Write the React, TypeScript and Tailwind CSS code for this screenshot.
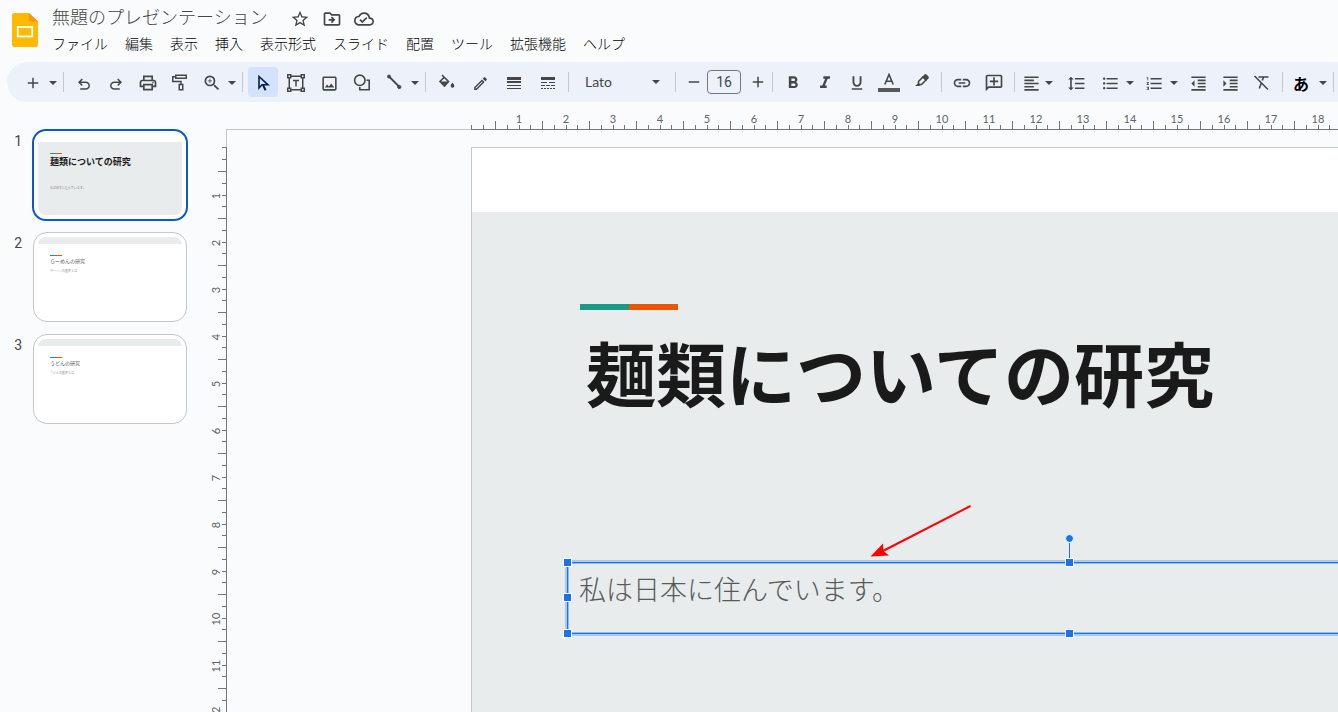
import type { ReactNode } from "react";
import {
    MdAdd,
    MdFormatAlignLeft,
    MdFormatBold,
    MdFormatIndentDecrease,
    MdFormatIndentIncrease,
    MdFormatItalic,
    MdFormatLineSpacing,
    MdFormatListBulleted,
    MdFormatListNumbered,
    MdFormatUnderlined,
    MdLink,
    MdOutlineAddComment,
    MdOutlineCloudDone,
    MdOutlineDriveFileMove,
    MdOutlineEdit,
    MdOutlineImage,
    MdOutlinePrint,
    MdRemove,
    MdStarBorder,
    MdZoomIn,
} from "react-icons/md";

const MENUS = [
    "ファイル",
    "編集",
    "表示",
    "挿入",
    "表示形式",
    "スライド",
    "配置",
    "ツール",
    "拡張機能",
    "ヘルプ",
];

interface Slide {
    title: string;
    body: string;
    cover?: boolean;
}

const SLIDES: Slide[] = [
    { title: "麺類についての研究", body: "私は日本に住んでいます。", cover: true },
    { title: "らーめんの研究", body: "ラーメンの歴史とは" },
    { title: "うどんの研究", body: "うどんの歴史とは" },
];

const range = (n: number) => Array.from({ length: n }, (_, i) => i + 1);

export default function App() {
    return (
        <div className="flex h-screen flex-col overflow-hidden bg-[#f9fbfd] font-['Roboto','Noto_Sans_CJK_JP',sans-serif] text-[#444746]">
            <Header />
            <Toolbar />
            <main className="flex min-h-0 flex-1">
                <Filmstrip />
                <Workspace />
            </main>
        </div>
    );
}

const Header = () => (
    <header className="flex h-[62px] shrink-0 items-start">
        <a href="#home" aria-label="スライド ホーム" className="mt-3 ml-3 block">
            <svg width="26" height="36" viewBox="0 0 26 36">
                <path d="M2.500 1H17l9 8.500V32.500a2.500 2.500 0 0 1-2.500 2.500h-21A2.500 2.500 0 0 1 0 32.500v-29A2.500 2.500 0 0 1 2.500 1Z" fill="#ffba00" />
                <path d="M17 1l9 8.500h-9Z" fill="#ff9310" />
                <rect x="5.800" y="15" width="14.400" height="9.500" fill="none" stroke="#fff" strokeWidth="1.800" />
            </svg>
        </a>
        <div className="ml-3.5">
            <div className="flex h-[34px] items-center">
                <h1 className="pt-0.5 text-lg font-light whitespace-nowrap">無題のプレゼンテーション</h1>
                <div className="mt-1 ml-[22px] flex gap-3">
                    <button aria-label="スター">
                        <MdStarBorder size={20} />
                    </button>
                    <button aria-label="移動">
                        <MdOutlineDriveFileMove size={20} />
                    </button>
                    <button aria-label="保存状況">
                        <MdOutlineCloudDone size={20} />
                    </button>
                </div>
            </div>
            <nav className="flex gap-[17px] text-sm text-black">
                {MENUS.map((menu) => (
                    <button key={menu} className="font-light whitespace-nowrap">
                        {menu}
                    </button>
                ))}
            </nav>
        </div>
    </header>
);

interface ToolProps {
    label: string;
    children: ReactNode;
    active?: boolean;
}

const Tool = ({ label, children, active }: ToolProps) => (
    <button
        aria-label={label}
        className={`flex h-[30px] w-[30px] shrink-0 items-center justify-center rounded pt-0.5 ${
            active ? "bg-[#d3e3fd] text-[#041e49]" : "hover:bg-[#e1e6ee]"
        }`}
    >
        {children}
    </button>
);

const CaretIcon = () => (
    <svg width="8" height="4" viewBox="0 0 8 4" fill="currentColor">
        <path d="M0 0h8L4 4Z" />
    </svg>
);

const Caret = ({ label }: { label: string }) => (
    <button aria-label={label} className="flex h-[30px] w-2.5 shrink-0 items-center justify-center pt-0.5">
        <CaretIcon />
    </button>
);

const Divider = () => <div className="mx-[5px] h-5 w-px shrink-0 bg-[#c7c7c7]" />;

const Toolbar = () => (
    <div className="ml-[7px] flex h-10 shrink-0 items-center overflow-hidden rounded-l-full bg-[#edf2fa] pl-[11px]">
        <div className="flex">
            <Tool label="新しいスライド">
                <MdAdd size={18} />
            </Tool>
            <Caret label="レイアウト付きの新しいスライド" />
        </div>
        <Divider />
        <div className="flex gap-0.5">
            <Tool label="元に戻す">
                <UndoIcon />
            </Tool>
            <Tool label="やり直し">
                <RedoIcon />
            </Tool>
            <Tool label="印刷">
                <MdOutlinePrint size={20} />
            </Tool>
            <Tool label="書式を貼り付け">
                <RollerIcon />
            </Tool>
            <div className="flex">
                <Tool label="ズーム">
                    <MdZoomIn size={20} />
                </Tool>
                <Caret label="ズームの倍率" />
            </div>
        </div>
        <Divider />
        <div className="flex gap-[3px]">
            <Tool label="選択" active>
                <CursorIcon />
            </Tool>
            <Tool label="テキスト ボックス">
                <TextBoxIcon />
            </Tool>
            <Tool label="画像を挿入">
                <MdOutlineImage size={19} />
            </Tool>
            <Tool label="図形">
                <ShapeIcon />
            </Tool>
            <div className="flex">
                <Tool label="線">
                    <LineIcon />
                </Tool>
                <Caret label="線の種類" />
            </div>
        </div>
        <Divider />
        <div className="flex gap-1">
            <Tool label="塗りつぶしの色">
                <FillIcon />
            </Tool>
            <Tool label="枠線の色">
                <MdOutlineEdit size={17} />
            </Tool>
            <Tool label="枠線の太さ">
                <WeightIcon />
            </Tool>
            <Tool label="枠線の破線">
                <DashIcon />
            </Tool>
        </div>
        <Divider />
        <button
            aria-label="フォント"
            className="flex h-[30px] w-24 shrink-0 items-center justify-between pr-2.5 pl-[11px] font-['Lato',sans-serif] text-sm"
        >
            Lato
            <CaretIcon />
        </button>
        <Divider />
        <div className="flex items-center gap-1">
            <button aria-label="フォントサイズを縮小" className="flex w-[22px] justify-end">
                <MdRemove size={18} />
            </button>
            <input
                aria-label="フォントサイズ"
                defaultValue="16"
                className="h-6 w-[34px] rounded border border-[#747775] bg-transparent text-center text-sm"
            />
            <button aria-label="フォントサイズを拡大" className="flex w-[22px] justify-end">
                <MdAdd size={18} />
            </button>
        </div>
        <Divider />
        <div className="flex gap-0.5">
            <Tool label="太字">
                <MdFormatBold size={20} />
            </Tool>
            <Tool label="斜体">
                <MdFormatItalic size={20} />
            </Tool>
            <Tool label="下線">
                <MdFormatUnderlined size={18} />
            </Tool>
            <Tool label="テキストの色">
                <TextColorIcon />
            </Tool>
            <Tool label="ハイライト カラー">
                <HighlightIcon />
            </Tool>
        </div>
        <Divider />
        <div className="flex gap-0.5">
            <Tool label="リンクを挿入">
                <MdLink size={20} />
            </Tool>
            <Tool label="コメントを追加">
                <MdOutlineAddComment size={20} className="-scale-x-100" />
            </Tool>
        </div>
        <Divider />
        <div className="flex gap-1">
            <button aria-label="配置" className="flex h-[30px] shrink-0 items-center gap-1 pt-0.5 pr-1 pl-0.5">
                <MdFormatAlignLeft size={19} />
                <CaretIcon />
            </button>
            <Tool label="行間隔と段落の間隔">
                <MdFormatLineSpacing size={19} />
            </Tool>
            <div className="flex">
                <Tool label="箇条書き">
                    <MdFormatListBulleted size={19} />
                </Tool>
                <Caret label="箇条書きの種類" />
            </div>
            <div className="flex">
                <Tool label="番号付きリスト">
                    <MdFormatListNumbered size={19} />
                </Tool>
                <Caret label="番号付きリストの種類" />
            </div>
            <div className="flex gap-0.5">
                <Tool label="インデント減">
                    <MdFormatIndentDecrease size={19} />
                </Tool>
                <Tool label="インデント増">
                    <MdFormatIndentIncrease size={19} />
                </Tool>
                <Tool label="書式をクリア">
                    <ClearIcon />
                </Tool>
            </div>
        </div>
        <Divider />
        <div className="flex">
            <Tool label="入力ツール">
                <span className="pt-1 pr-1 text-base font-bold text-black">あ</span>
            </Tool>
            <Caret label="入力ツールを選択" />
        </div>
        <Divider />
    </div>
);

const Filmstrip = () => (
    <aside className="w-[209px] shrink-0 pt-[27px]">
        <ol className="flex flex-col gap-2.5">
            {SLIDES.map((slide, i) => (
                <li key={slide.title} className="flex h-[92px]">
                    <span className="w-8 shrink-0 pt-0.5 pr-2.5 text-right text-sm">{i + 1}</span>
                    <Thumbnail slide={slide} active={i === 0} />
                </li>
            ))}
        </ol>
    </aside>
);

const Thumbnail = ({ slide, active }: { slide: Slide; active: boolean }) => (
    <button
        aria-label={slide.title}
        className={`flex flex-col bg-white text-left ${
            active
                ? "w-[156px] rounded-[14px] border-2 border-[#0b57d0] p-1"
                : "m-px w-[154px] rounded-[14px] border border-[#c4c7c5] p-1"
        }`}
    >
        <div className={`flex w-full flex-1 flex-col overflow-hidden rounded-[8px] ${slide.cover ? "pt-[7px]" : ""}`}>
            {!slide.cover && <div className="h-[7px] w-full bg-[#e8eced]" />}
            <div className={`flex-1 px-3 pt-[11px] ${slide.cover ? "bg-[#e8eced]" : "bg-white"}`}>
                <div className="flex h-px w-3">
                    <div className="flex-1 bg-[#1a9988]" />
                    <div className="flex-1 bg-[#eb5600]" />
                </div>
                <p
                    className={
                        slide.cover
                            ? "mt-0.5 text-[9px] leading-3 font-bold text-[#1a1a1a]"
                            : "mt-px text-[5px] leading-2 text-[#595959]"
                    }
                >
                    {slide.title}
                </p>
                <p
                    className={`text-[3px] leading-1 font-light text-[#595959] ${slide.cover ? "mt-[18px]" : "mt-1"}`}
                >
                    {slide.body}
                </p>
            </div>
        </div>
    </button>
);

const Workspace = () => (
    <section className="flex min-w-0 flex-1 flex-col overflow-hidden">
        <HorizontalRuler />
        <div className="flex min-h-0 flex-1">
            <VerticalRuler />
            <div className="min-w-0 flex-1 overflow-hidden pt-[17px] pl-[244px]">
                <SlideCanvas slide={SLIDES[0]} />
            </div>
        </div>
    </section>
);

const HorizontalRuler = () => (
    <div className="ml-[17px] flex h-7 shrink-0 overflow-hidden font-['Lato',sans-serif] text-[11px] text-[#5f6368]">
        <div className="w-[245px] shrink-0 border-b border-[#c4c7c5]" />
        <div className="flex flex-1 shrink-0 items-end border-b border-[#747775]">
            <div className="grid h-1 w-6 shrink-0 grid-cols-2">
                <div className="border-l border-[#747775]" />
                <div className="border-l border-[#747775]" />
            </div>
            {range(18).map((cm) => (
                <div key={cm} className="flex w-[47px] shrink-0 flex-col">
                    <span className="-mb-1.5 pl-px text-center leading-4">{cm}</span>
                    <div className="grid h-2 grid-cols-4 items-end">
                        <div className="h-2 border-l border-[#747775]" />
                        <div className="h-1 border-l border-[#747775]" />
                        <div className="h-1 border-l border-[#747775]" />
                        <div className="h-1 border-l border-[#747775]" />
                    </div>
                </div>
            ))}
        </div>
    </div>
);

const VerticalRuler = () => (
    <div className="flex w-[18px] shrink-0 flex-col overflow-hidden font-['Lato',sans-serif] text-[11px] text-[#5f6368]">
        <div className="h-[17px] shrink-0 border-r border-[#c4c7c5]" />
        <div className="flex shrink-0 flex-col items-end border-r border-[#747775]">
            <div className="grid h-6 w-1 grid-rows-2">
                <div className="border-t border-[#747775]" />
                <div className="border-t border-[#747775]" />
            </div>
            {range(12).map((cm) => (
                <div key={cm} className="flex h-[47px]">
                    <span className="-mr-1 flex w-3 items-center justify-center pt-0.5">
                        <span className="-rotate-90 leading-3">{cm}</span>
                    </span>
                    <div className="grid w-2 grid-rows-4 justify-items-end">
                        <div className="w-2 border-t border-[#747775]" />
                        <div className="w-1 border-t border-[#747775]" />
                        <div className="w-1 border-t border-[#747775]" />
                        <div className="w-1 border-t border-[#747775]" />
                    </div>
                </div>
            ))}
        </div>
    </div>
);

const Handle = ({ className }: { className: string }) => (
    <span className={`absolute size-[9px] border border-white bg-[#1a73e8] ${className}`} />
);

// The slide is a free canvas: its objects keep their own coordinates.
const SlideCanvas = ({ slide }: { slide: Slide }) => (
    <article className="relative h-[674px] w-[1196px] border border-[#c4c7c5] bg-white pt-16">
        <div className="h-full bg-[#e8eced]" />
        <div className="absolute top-[156px] left-[108px] flex h-1.5 w-[98px]">
            <div className="flex-1 bg-[#1a9988]" />
            <div className="flex-1 bg-[#eb5600]" />
        </div>
        <h2 className="absolute top-[180px] left-[114px] text-[70px] leading-[100px] font-bold whitespace-nowrap text-[#1a1a1a]">
            {slide.title}
        </h2>
        <div className="absolute top-[414px] left-[95px] h-[72px] w-[1004px] border border-[#1a73e8] ring-2 inset-ring-1 ring-[#1a73e8]/30 inset-ring-[#1a73e8]/40">
            <p className="px-[11px] pt-2 text-[27px] leading-10 font-light text-[#595959]">{slide.body}</p>
            <span className="absolute -top-5 left-1/2 h-5 w-px bg-[#1a73e8]" />
            <span className="absolute -top-[29px] left-1/2 -ml-1 size-[9px] rounded-full border border-white bg-[#1a73e8]" />
            <Handle className="-top-[5px] -left-[5px]" />
            <Handle className="-top-[5px] left-1/2 -ml-1" />
            <Handle className="top-1/2 -left-[5px] -mt-[5px]" />
            <Handle className="-bottom-[5px] -left-[5px]" />
            <Handle className="-bottom-[5px] left-1/2 -ml-1" />
        </div>
        <svg className="absolute top-[357px] left-[397px]" width="104" height="54" viewBox="0 0 104 54">
            <path d="M101.500 1 12 47" stroke="#f00" strokeWidth="2" />
            <path d="M1.500 51.500 14 38.500l.5 7.500 5.500 4.500Z" fill="#f00" />
        </svg>
    </article>
);

const UndoIcon = () => (
    <svg width="18" height="18" viewBox="0 0 24 24" fill="currentColor">
        <path d="M7 21v-2h7.100q1.575 0 2.738-1T18 15.500 16.838 13 14.100 12H7.800l2.600 2.600L9 16l-5-5 5-5 1.400 1.400L7.800 10h6.300q2.425 0 4.163 1.575T20 15.500t-1.737 3.925T14.100 21Z" />
    </svg>
);

const RedoIcon = () => (
    <svg width="18" height="18" viewBox="0 0 24 24" fill="currentColor">
        <path d="M9.900 21q-2.425 0-4.163-1.575T4 15.500t1.737-3.925T9.900 10h6.300l-2.600-2.600L15 6l5 5-5 5-1.400-1.400 2.600-2.600H9.900q-1.575 0-2.738 1T6 15.500 7.162 18t2.738 1H17v2Z" />
    </svg>
);

const RollerIcon = () => (
    <svg width="18" height="18" viewBox="0 0 18 18" fill="none" stroke="currentColor" strokeWidth="1.500">
        <path d="M4.750 1.250h10.500v3H4.750ZM4.750 2.750H1.750V7.500H10v3M8.250 10.500h3.500v5.250h-3.500Z" />
    </svg>
);

const CursorIcon = () => (
    <svg width="18" height="18" viewBox="0 0 18 18" fill="none" stroke="currentColor" strokeWidth="1.600">
        <path d="M5 2.500v11.500l3-3.200h6Z" />
        <path d="m9 11 2.600 5.200" strokeWidth="2" />
    </svg>
);

const TextBoxIcon = () => (
    <svg width="18" height="18" viewBox="0 0 18 18" fill="none" stroke="currentColor" strokeWidth="1.500">
        <path d="M.75.750h3v3h-3ZM14.250.750h3v3h-3ZM.75 14.250h3v3h-3ZM14.250 14.250h3v3h-3ZM3.750 2.250h10.500M3.750 15.750h10.500M2.250 3.750v10.500M15.750 3.750v10.500M6 6.500h6M9 6.500V12.500" />
    </svg>
);

const ShapeIcon = () => (
    <svg width="18" height="18" viewBox="0 0 18 18" fill="none" stroke="currentColor" strokeWidth="1.600">
        <circle cx="6.800" cy="6.300" r="5.200" />
        <path d="M13.500 6.300h2.700v9.400H6.800V13" />
    </svg>
);

const LineIcon = () => (
    <svg width="18" height="18" viewBox="0 0 18 18" fill="currentColor" stroke="currentColor">
        <path d="M3 2.500 13.500 13" strokeWidth="1.800" />
        <circle cx="3" cy="2.500" r="1.500" />
        <circle cx="13.300" cy="13" r="1.600" />
    </svg>
);

const FillIcon = () => (
    <svg width="18" height="18" viewBox="0 0 18 18">
        <path d="M5 1 11.500 7.500 7.500 12 3 7.500 7.500 3" fill="none" stroke="currentColor" strokeWidth="1.600" />
        <path d="M3 7.500h8.500L7.500 12ZM15.500 8.500q1.900 2.200 1.900 3.300a1.900 1.900 0 0 1-3.800 0q0-1.100 1.900-3.300Z" fill="currentColor" />
    </svg>
);

const WeightIcon = () => (
    <svg width="14" height="14" viewBox="0 0 14 14" fill="currentColor" shapeRendering="crispEdges">
        <path d="M0 1h14v3H0ZM0 5h14v2H0ZM0 9h14v1H0ZM0 12h14v1H0Z" />
    </svg>
);

const DashIcon = () => (
    <svg width="14" height="14" viewBox="0 0 14 14" fill="currentColor" shapeRendering="crispEdges">
        <path d="M0 1h14v3H0ZM0 6h6v1H0ZM8 6h6v1H8ZM0 9h4v1H0ZM5 9h4v1H5ZM10 9h4v1h-4ZM0 12h2v1H0ZM3 12h2v1H3ZM6 12h2v1H6ZM9 12h2v1H9ZM12 12h2v1h-2Z" />
    </svg>
);

const TextColorIcon = () => (
    <svg width="22" height="20" viewBox="0 0 22 20" fill="none" stroke="currentColor" strokeWidth="1.600">
        <path d="M6.800 11.500 11 1.500l4.200 10M8.200 8.300h5.600" />
        <path d="M0 17h22" stroke="#595959" strokeWidth="4" />
    </svg>
);

const HighlightIcon = () => (
    <svg width="18" height="20" viewBox="0 0 18 20">
        <path d="m6.500 8.500 4.500-4.500 3 3-4.500 4.500h-3Z" fill="none" stroke="currentColor" strokeWidth="1.600" />
        <path d="m10 4 2.500-2.500q1-.8 2 0l2 2q.8 1 0 2L14 8ZM3 13l3.500-3 2 2-1 1Z" fill="currentColor" />
    </svg>
);

const ClearIcon = () => (
    <svg width="18" height="18" viewBox="0 0 18 18" fill="none" stroke="currentColor" strokeWidth="1.600">
        <path d="M1.500 2 15 15.500M5.500 3h10M10.300 3.500 9.300 6.500M8.100 9.500 6.300 14.500" />
    </svg>
);
